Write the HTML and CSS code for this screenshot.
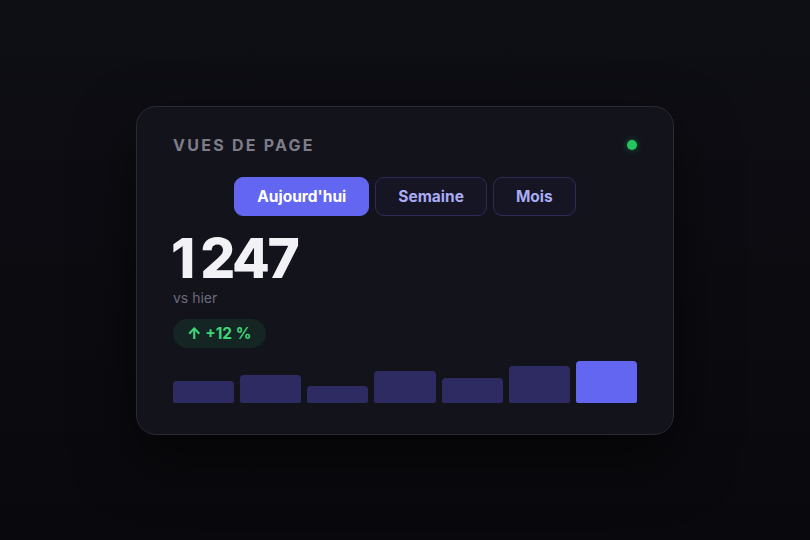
FILE: index.html
```html
<!DOCTYPE html>
<html lang="fr">
<head>
<meta charset="utf-8">
<title>Vues de page</title>
<link rel="stylesheet" href="styles.css">
</head>
<body>
<main class="stage">
  <section class="card">
    <header class="card-head">
      <h2 class="title">VUES DE PAGE</h2>
      <span class="live-dot"></span>
    </header>
    <nav class="tabs">
      <button class="tab tab-active">Aujourd'hui</button>
      <button class="tab">Semaine</button>
      <button class="tab">Mois</button>
    </nav>
    <div class="value">1 247</div>
    <div class="caption">vs hier</div>
    <div class="badge"><span class="arrow">↑</span> +12 %</div>
    <div class="bars">
      <div class="bar" style="height:22px"></div>
      <div class="bar" style="height:28px"></div>
      <div class="bar" style="height:17px"></div>
      <div class="bar" style="height:32px"></div>
      <div class="bar" style="height:25px"></div>
      <div class="bar" style="height:37px"></div>
      <div class="bar bar-current" style="height:42px"></div>
    </div>
  </section>
</main>
</body>
</html>
```

FILE: styles.css
```css
* { box-sizing: border-box; }
html, body { margin: 0; padding: 0; }
body {
  width: 810px;
  height: 540px;
  background: linear-gradient(180deg, #0e0e15 0%, #0b0b10 60%, #09090d 100%);
  font-family: Inter, "Noto Sans", "Liberation Sans", sans-serif;
  overflow: hidden;
}
.stage {
  width: 810px;
  height: 540px;
  display: flex;
  align-items: center;
  justify-content: center;
}
.card {
  width: 538px;
  height: 329px;
  background: #13131c;
  border: 1px solid #2a2a35;
  border-radius: 20px;
  padding: 29px 36px 29px;
  display: flex;
  flex-direction: column;
  box-shadow: 0 24px 60px rgba(0, 0, 0, 0.55);
}
.card-head {
  height: 19px;
  display: flex;
  align-items: center;
  justify-content: space-between;
  margin-bottom: 22px;
}
.title {
  margin: 0;
  font-size: 16px;
  line-height: 19px;
  font-weight: 700;
  letter-spacing: 2.25px;
  color: #7d7d88;
}
.live-dot {
  width: 10px;
  height: 10px;
  border-radius: 50%;
  background: #22c55e;
  box-shadow: 0 0 6px rgba(34, 197, 94, 0.45);
}
.tabs {
  display: flex;
  justify-content: center;
  gap: 6px;
  margin-bottom: 13px;
}
.tab {
  height: 39px;
  padding: 0 22px;
  border-radius: 9px;
  border: 1px solid #2d2b58;
  background: #151524;
  color: #a9acf5;
  font-family: inherit;
  font-size: 15.5px;
  font-weight: 700;
  cursor: pointer;
}
.tab-active {
  background: #6366f1;
  border-color: #6366f1;
  color: #ffffff;
}
.value {
  font-size: 55px;
  line-height: 58px;
  font-weight: 800;
  letter-spacing: -2.5px;
  word-spacing: -2px;
  color: #f1f1f6;
  margin-left: -2px;
}
.caption {
  margin-top: 2px;
  font-size: 14px;
  line-height: 17px;
  color: #6b6b78;
}
.badge {
  align-self: flex-start;
  margin-top: 13px;
  height: 29px;
  padding: 0 14px;
  border-radius: 15px;
  background: rgba(34, 197, 94, 0.1);
  color: #3fd67a;
  font-size: 15.5px;
  font-weight: 700;
  display: flex;
  align-items: center;
  white-space: pre;
}
.arrow { font-weight: 800; }
.bars {
  margin-top: 13px;
  height: 42px;
  display: flex;
  align-items: flex-end;
  gap: 6px;
}
.bar {
  flex: 1;
  background: #2e2b62;
  border-radius: 4px 4px 2px 2px;
}
.bar-current {
  background: #6366f1;
}
```
